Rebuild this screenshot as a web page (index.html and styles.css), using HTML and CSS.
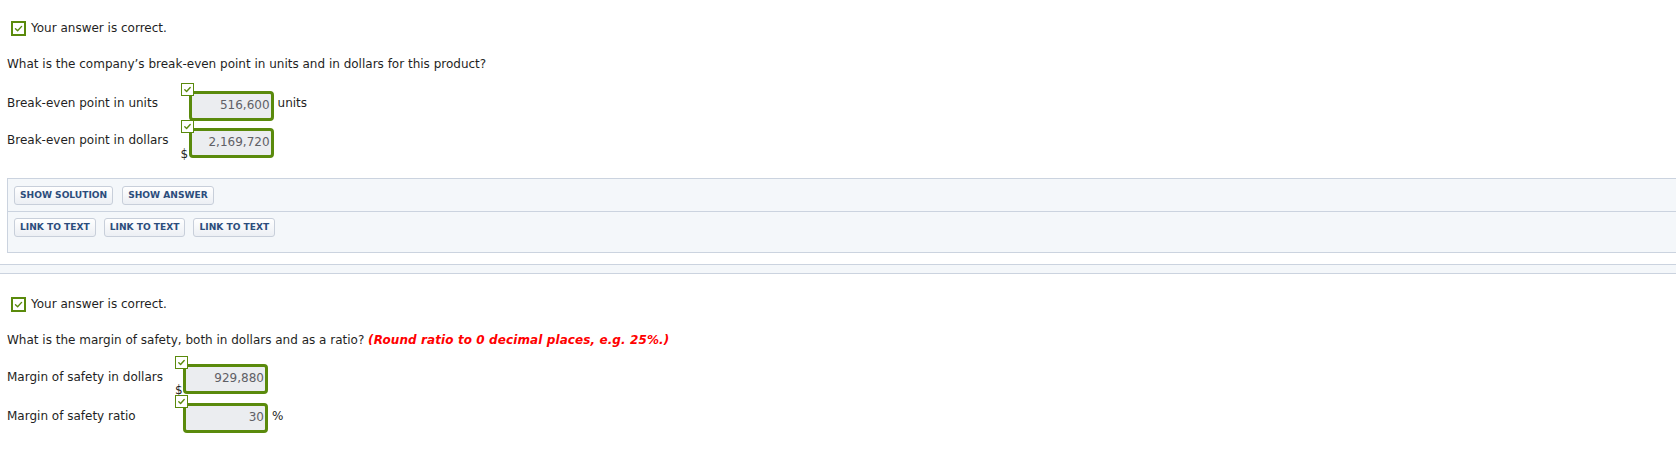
FILE: index.html
```html
<!DOCTYPE html>
<html>
<head>
<meta charset="utf-8">
<link rel="stylesheet" href="styles.css">
</head>
<body>
<div class="page">
  <section class="part part-one">
    <div class="status">
      <span class="check check-lg"><svg viewBox="0 0 11 11"><polyline points="2.5,5.8 4.6,7.8 8.6,3.4"/></svg></span>
      <span>Your answer is correct.</span>
    </div>
    <p class="question">What is the company’s break-even point in units and in dollars for this product?</p>
    <div class="answers">
      <div class="label">Break-even point in units</div>
      <div class="field">
        <span class="cur"></span>
        <span class="box"><span class="check check-sm"><svg viewBox="0 0 9 9"><polyline points="1.8,4.8 3.6,6.4 7.2,2.6"/></svg></span><span class="val">516,600</span></span>
      </div>
      <div class="unit">units</div>

      <div class="label">Break-even point in dollars</div>
      <div class="field">
        <span class="cur">$</span>
        <span class="box"><span class="check check-sm"><svg viewBox="0 0 9 9"><polyline points="1.8,4.8 3.6,6.4 7.2,2.6"/></svg></span><span class="val">2,169,720</span></span>
      </div>
      <div class="unit"></div>
    </div>
  </section>

  <div class="tools">
    <div class="tool-row tool-row-first">
      <button class="btn">SHOW SOLUTION</button>
      <button class="btn">SHOW ANSWER</button>
    </div>
    <div class="tool-row tool-row-last">
      <button class="btn">LINK TO TEXT</button>
      <button class="btn">LINK TO TEXT</button>
      <button class="btn">LINK TO TEXT</button>
    </div>
  </div>
</div>

<div class="band"></div>

<div class="page">
  <section class="part part-two">
    <div class="status">
      <span class="check check-lg"><svg viewBox="0 0 11 11"><polyline points="2.5,5.8 4.6,7.8 8.6,3.4"/></svg></span>
      <span>Your answer is correct.</span>
    </div>
    <p class="question">What is the margin of safety, both in dollars and as a ratio? <em class="hint">(Round ratio to 0 decimal places, e.g. 25%.)</em></p>
    <div class="answers">
      <div class="label">Margin of safety in dollars</div>
      <div class="field">
        <span class="cur">$</span>
        <span class="box"><span class="check check-sm"><svg viewBox="0 0 9 9"><polyline points="1.8,4.8 3.6,6.4 7.2,2.6"/></svg></span><span class="val">929,880</span></span>
      </div>
      <div class="unit"></div>

      <div class="label">Margin of safety ratio</div>
      <div class="field">
        <span class="cur"></span>
        <span class="box"><span class="check check-sm"><svg viewBox="0 0 9 9"><polyline points="1.8,4.8 3.6,6.4 7.2,2.6"/></svg></span><span class="val">30</span></span>
      </div>
      <div class="unit">%</div>
    </div>
  </section>
</div>
</body>
</html>
```
FILE: styles.css
```css
html, body {
  margin: 0;
  padding: 0;
  background: #ffffff;
}
body {
  font-family: "DejaVu Sans", Verdana, sans-serif;
  font-size: 12px;
  line-height: 15px;
  color: #1f1f24;
  overflow: hidden;
}
.page {
  padding-left: 7px;
}
.part-one {
  padding-top: 21px;
}
.part-two {
  padding-top: 23px;
}
.status {
  display: flex;
  align-items: center;
  gap: 5px;
  padding-left: 4px;
  height: 15px;
}
.check {
  display: inline-flex;
  align-items: center;
  justify-content: center;
  box-sizing: border-box;
  background: #fff;
  border: 2px solid #5a8a0c;
}
.check svg {
  fill: none;
  stroke: #5a8a0c;
  stroke-width: 1.4;
  stroke-linecap: round;
  stroke-linejoin: round;
}
.check-lg {
  width: 15px;
  height: 15px;
}
.check-lg svg {
  width: 11px;
  height: 11px;
}
.check-sm {
  width: 13px;
  height: 13px;
  position: absolute;
  left: -11px;
  top: -11px;
  border-width: 1.5px;
}
.check-sm svg {
  width: 9px;
  height: 9px;
}
.question {
  margin: 21px 0 0;
}
.hint {
  color: #ff0000;
  font-weight: bold;
  font-style: italic;
  letter-spacing: 0.1px;
}
.answers {
  display: grid;
  grid-template-columns: auto auto auto;
  justify-content: start;
  row-gap: 7px;
  margin-top: 19px;
  align-items: center;
}
.part-two .answers {
  row-gap: 9px;
  margin-top: 16px;
}
.label {
  padding-right: 12px;
  margin-top: -6px;
}
.part-two .label {
  margin-top: -3px;
}
.field {
  display: flex;
  align-items: flex-end;
}
.cur {
  width: 8px;
  line-height: 12px;
  margin-bottom: -2px;
}
.box {
  position: relative;
  box-sizing: border-box;
  width: 85px;
  height: 30px;
  border: 3px solid #5a8a0c;
  border-radius: 4px;
  background: #ebedf0;
  display: flex;
  align-items: center;
  justify-content: flex-end;
  padding-right: 1px;
}
.val {
  color: #5f6066;
  margin-top: -2px;
}
.unit {
  padding-left: 4px;
  margin-top: -6px;
}
.part-two .unit {
  margin-top: -4px;
}
.tools {
  margin-top: 20px;
  background: #f4f7fa;
  border: 1px solid #cbd3df;
  border-right: none;
}
.tool-row {
  display: flex;
  gap: 8px;
  padding: 6px 6px 6px;
}
.tool-row-first {
  gap: 9px;
  padding-top: 7px;
  padding-bottom: 6px;
}
.tool-row + .tool-row {
  border-top: 1px solid #cbd3df;
}
.tool-row-last {
  padding-bottom: 15px;
}
.btn {
  font-family: "DejaVu Sans", Verdana, sans-serif;
  font-size: 9.1px;
  font-weight: bold;
  color: #2c4d7c;
  height: 19px;
  padding: 0 5px;
  border: 1px solid #c8cfda;
  border-radius: 3px;
  background: linear-gradient(#ffffff, #eceff4);
  line-height: 17px;
}
.band {
  margin-top: 11px;
  height: 8px;
  background: #f4f7fa;
  border-top: 1px solid #cbd3df;
  border-bottom: 1px solid #cbd3df;
}
```
